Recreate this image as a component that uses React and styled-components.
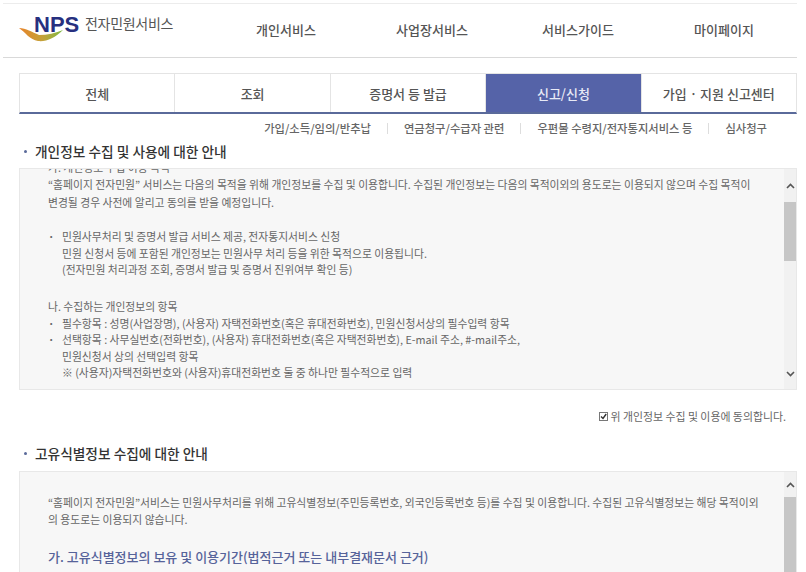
import React from 'react';
import styled, { createGlobalStyle } from 'styled-components';

const GlobalStyle = createGlobalStyle`
  html, body {
    margin: 0;
    padding: 0;
    height: 572px;
    overflow: hidden;
    background: #fff;
    font-family: "Noto Sans CJK KR", "Noto Sans", sans-serif;
    color: #444;
  }
  * { box-sizing: border-box; }
`;

const Page = styled.div`
  width: 806px;
  height: 572px;
  overflow: hidden;
  padding-top: 3px;
`;

const Header = styled.header`
  height: 55px;
  margin-left: 3px;
  margin-right: 9px;
  border-top: 1px solid #ececec;
  border-bottom: 1px solid #d9d9d9;
  display: flex;
  align-items: center;
`;

const LogoWrap = styled.div`
  width: 210px;
  flex: none;
  padding-left: 15px;
  display: flex;
  align-items: flex-start;
  height: 40px;
  margin-top: 3px;
`;

const LogoMark = styled.div`
  position: relative;
  width: 67px;
  height: 40px;
  flex: none;
`;

const LogoCurve = styled.svg`
  position: absolute;
  left: 1px;
  top: 10px;
`;

const LogoLetters = styled.span`
  position: absolute;
  left: 16px;
  top: 1px;
  font-family: "Liberation Sans", Arial, sans-serif;
  font-weight: 700;
  font-size: 22px;
  line-height: 24px;
  color: #27307f;
`;

const LogoTitle = styled.span`
  font-size: 14px;
  line-height: 20px;
  margin-top: 1px;
  letter-spacing: -0.3px;
  color: #555;
  white-space: nowrap;
`;

const MainNav = styled.nav`
  width: 584px;
  flex: none;
  display: flex;
  font-size: 13px;
  margin-bottom: 3px;
`;

const MainNavItem = styled.a`
  flex: 1;
  text-align: center;
  font-weight: 500;
  color: #555;
  white-space: nowrap;
`;

const Tabs = styled.div`
  display: flex;
  height: 41px;
  margin: 15px 9px 0 19px;
  border: 1px solid #e4e4e4;
  border-bottom: 2px solid #5a6a9a;
`;

const Tab = styled.a`
  flex: 1;
  display: flex;
  align-items: center;
  justify-content: center;
  font-size: 13px;
  font-weight: 500;
  color: ${(p) => (p.$active ? '#e8eaf6' : '#555')};
  background: ${(p) => (p.$active ? '#5563a8' : '#fff')};
  border-left: ${(p) => (p.$first ? 'none' : '1px solid #e4e4e4')};
`;

const SubNav = styled.div`
  display: flex;
  justify-content: flex-end;
  align-items: center;
  height: 20px;
  margin: 4px 39px 0 0;
  font-size: 11.3px;
  font-weight: 500;
  color: #666;
`;

const SubDivider = styled.span`
  width: 1px;
  height: 11px;
  margin: 0 16px;
  background: #ddd;
`;

const SectionTitle = styled.h2`
  margin: ${(p) => p.$top}px 0 0 24px;
  height: 20px;
  display: flex;
  align-items: center;
  font-size: 13.7px;
  font-weight: 500;
  color: #333;
  &::before {
    content: '';
    width: 3px;
    height: 3px;
    margin-right: 8px;
    border-radius: 50%;
    background: #5a6a9a;
  }
`;

const ScrollBox = styled.div`
  display: flex;
  height: ${(p) => p.$height}px;
  margin: ${(p) => p.$top}px 9px 0 19px;
  border: 1px solid #e8e8e8;
  background: #f7f7f7;
  overflow: hidden;
`;

const BoxBody = styled.div`
  flex: 1;
  overflow: hidden;
  padding: ${(p) => p.$top}px 30px 0 28px;
  font-size: 10.8px;
  line-height: 16.6px;
  color: #666;
  white-space: nowrap;
`;

const Para = styled.p`
  margin: 0 0 ${(p) => p.$after || 0}px;
`;

const ClippedPara = styled(Para)`
  margin-top: -10px;
  line-height: 17.4px;
`;

const GapPara = styled(Para)`
  margin-top: 20px;
`;

const Bullet = styled.div`
  position: relative;
  padding-left: 14px;
  &::before {
    content: '·';
    position: absolute;
    left: 0;
    top: 0;
    font-weight: 700;
  }
`;

const BlueHeading = styled.h3`
  margin: 20px 0 0;
  font-size: 13px;
  line-height: 20px;
  font-weight: 500;
  color: #56639a;
`;

const Rail = styled.div`
  width: 12px;
  flex: none;
  display: flex;
  flex-direction: column;
  background: #f1f1f1;
`;

const RailArrow = styled.div`
  height: ${(p) => p.$height}px;
  flex: none;
  display: flex;
  align-items: center;
  justify-content: center;
  color: #555;
`;

const RailThumb = styled.div`
  height: ${(p) => p.$height}px;
  flex: none;
  background: #c6c6c6;
`;

const RailSpace = styled.div`
  flex: 1;
`;

const Agree = styled.label`
  display: flex;
  justify-content: flex-end;
  align-items: center;
  height: 16px;
  margin: 18px 20px 0 0;
  font-size: 10.9px;
  color: #666;
`;

const CheckMark = styled.span`
  width: 9px;
  height: 9px;
  margin-right: 2px;
  border: 1px solid #777;
  background: #fff;
  display: flex;
  align-items: center;
  justify-content: center;
`;

const Chevron = ({ up }) => (
  <svg width="9" height="6" viewBox="0 0 9 6" fill="none" stroke="currentColor" strokeWidth="1.6">
    <path d={up ? 'M1 5l3.5-3.5L8 5' : 'M1 1l3.5 3.5L8 1'} />
  </svg>
);

const mainMenu = ['개인서비스', '사업장서비스', '서비스가이드', '마이페이지'];
const tabs = ['전체', '조회', '증명서 등 발급', '신고/신청', '가입 · 지원 신고센터'];
const subMenu = ['가입/소득/임의/반추납', '연금청구/수급자 관련', '우편물 수령지/전자통지서비스 등', '심사청구'];

export default function App() {
  return (
    <Page>
      <GlobalStyle />
      <Header>
        <LogoWrap>
          <LogoMark>
            <LogoCurve width="50" height="26" viewBox="0 0 50 26">
              <defs>
                <linearGradient id="swoosh" x1="0" x2="1" y1="0" y2="0">
                  <stop offset="0" stopColor="#e8842a" />
                  <stop offset="0.55" stopColor="#c3a33a" />
                  <stop offset="1" stopColor="#7dbb45" />
                </linearGradient>
              </defs>
              <path d="M0 6C7 6 13 10 20 13C28 13 37 11 44 8C36 16 27 20 19 19C11 18 6 10 0 6Z" fill="url(#swoosh)" />
            </LogoCurve>
            <LogoLetters>NPS</LogoLetters>
          </LogoMark>
          <LogoTitle>전자민원서비스</LogoTitle>
        </LogoWrap>
        <MainNav>
          {mainMenu.map((item) => (
            <MainNavItem key={item}>{item}</MainNavItem>
          ))}
        </MainNav>
      </Header>

      <Tabs>
        {tabs.map((tab, i) => (
          <Tab key={tab} $first={i === 0} $active={i === 3}>{tab}</Tab>
        ))}
      </Tabs>

      <SubNav>
        {subMenu.map((item, i) => (
          <React.Fragment key={item}>
            {i > 0 && <SubDivider />}
            <span>{item}</span>
          </React.Fragment>
        ))}
      </SubNav>

      <SectionTitle $top={3}>개인정보 수집 및 사용에 대한 안내</SectionTitle>

      <ScrollBox $top={7} $height={222}>
        <BoxBody $top={0}>
          <ClippedPara $after={17}>
            가. 개인정보 수집 이용 목적<br />
            “홈페이지 전자민원” 서비스는 다음의 목적을 위해 개인정보를 수집 및 이용합니다. 수집된 개인정보는 다음의 목적이외의 용도로는 이용되지 않으며 수집 목적이<br />
            변경될 경우 사전에 알리고 동의를 받을 예정입니다.
          </ClippedPara>
          <Bullet>
            민원사무처리 및 증명서 발급 서비스 제공, 전자통지서비스 신청<br />
            민원 신청서 등에 포함된 개인정보는 민원사무 처리 등을 위한 목적으로 이용됩니다.<br />
            (전자민원 처리과정 조회, 증명서 발급 및 증명서 진위여부 확인 등)
          </Bullet>
          <GapPara>나. 수집하는 개인정보의 항목</GapPara>
          <Bullet>필수항목 : 성명(사업장명), (사용자) 자택전화번호(혹은 휴대전화번호), 민원신청서상의 필수입력 항목</Bullet>
          <Bullet>
            선택항목 : 사무실번호(전화번호), (사용자) 휴대전화번호(혹은 자택전화번호), E-mail 주소, #-mail주소,<br />
            민원신청서 상의 선택입력 항목<br />
            ※ (사용자)자택전화번호와 (사용자)휴대전화번호 둘 중 하나만 필수적으로 입력
          </Bullet>
        </BoxBody>
        <Rail>
          <RailArrow $height={33}><Chevron up /></RailArrow>
          <RailThumb $height={59} />
          <RailSpace />
          <RailArrow $height={30}><Chevron /></RailArrow>
        </Rail>
      </ScrollBox>

      <Agree>
        <CheckMark>
          <svg width="7" height="7" viewBox="0 0 7 7" fill="none" stroke="#333" strokeWidth="1.4">
            <path d="M1 3.5l2 2L6.2 1" />
          </svg>
        </CheckMark>
        위 개인정보 수집 및 이용에 동의합니다.
      </Agree>

      <SectionTitle $top={19}>고유식별정보 수집에 대한 안내</SectionTitle>

      <ScrollBox $top={8} $height={120}>
        <BoxBody $top={22}>
          <Para>
            “홈페이지 전자민원”서비스는 민원사무처리를 위해 고유식별정보(주민등록번호, 외국인등록번호 등)를 수집 및 이용합니다. 수집된 고유식별정보는 해당 목적이외<br />
            의 용도로는 이용되지 않습니다.
          </Para>
          <BlueHeading>가. 고유식별정보의 보유 및 이용기간(법적근거 또는 내부결재문서 근거)</BlueHeading>
        </BoxBody>
        <Rail>
          <RailArrow $height={25}><Chevron up /></RailArrow>
          <RailThumb $height={95} />
        </Rail>
      </ScrollBox>
    </Page>
  );
}
